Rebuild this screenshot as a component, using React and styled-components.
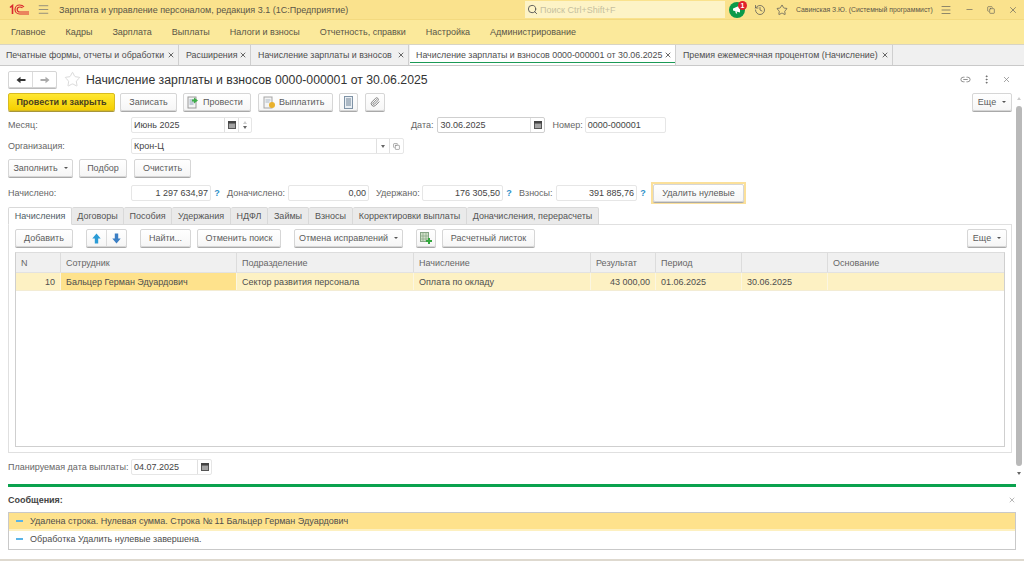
import React from "react";
import styled, { createGlobalStyle } from "styled-components";
import { Menu, History, Star, Minus, X, Search, Link2, MoreVertical, Paperclip, Copy } from "lucide-react";

const Global = createGlobalStyle`
  html, body { margin: 0; padding: 0; background: #fff; }
  body { font-family: "Liberation Sans", Arial, sans-serif; font-size: 9px; color: #4e4e4e; }
  * { box-sizing: border-box; }
`;

const Page = styled.div`
  width: 1024px;
  height: 561px;
  overflow: hidden;
  display: flex;
  flex-direction: column;
  background: #fff;
`;

const TitleBar = styled.div`
  height: 20px;
  display: flex;
  align-items: center;
  background: #fae28d;
  border-bottom: 1px solid #f3d97f;
  flex: none;
`;

const Logo = styled.svg`
  margin-left: 9px;
  width: 20px;
  height: 11px;
`;

const Burger = styled(Menu)`
  margin-left: 8px;
  color: #777;
`;

const AppTitle = styled.span`
  margin-left: 9px;
  width: 466px;
  color: #5a5648;
  font-size: 9px;
  white-space: nowrap;
`;

const SearchBox = styled.div`
  width: 200px;
  height: 17px;
  background: #fdf3c6;
  display: flex;
  align-items: center;
  gap: 2px;
  padding-left: 2px;
  color: #c6bf9f;
  svg { color: #555; }
`;

const Bell = styled.div`
  position: relative;
  margin-left: 4px;
  width: 16px;
  height: 16px;
  border-radius: 50%;
  background: #0b9a4a;
  display: flex;
  align-items: center;
  justify-content: center;
`;

const Badge = styled.span`
  position: absolute;
  top: -1px;
  right: -2px;
  width: 9px;
  height: 9px;
  border-radius: 50%;
  background: #e0202a;
  color: #fff;
  font-size: 7px;
  font-weight: 700;
  line-height: 9px;
  text-align: center;
`;

const TopIcon = styled.span`
  display: flex;
  align-items: center;
  justify-content: center;
  flex: none;
  width: 14px;
  margin-left: ${(p) => p.$ml}px;
  color: #555;
`;

const UserName = styled.span`
  margin-left: 7px;
  width: 143px;
  flex: none;
  font-size: 6.85px;
  white-space: nowrap;
  color: #5a5648;
`;

const MenuBar = styled.nav`
  height: 24px;
  flex: none;
  display: flex;
  align-items: center;
  gap: 20px;
  padding: 0 0 1px 11px;
  background: #fbe99b;
  color: #5a5648;
`;

const TabsBar = styled.div`
  height: 22px;
  flex: none;
  display: flex;
  background: #f0f0f0;
  border-top: 1px solid #d8d4c4;
  border-bottom: 1px solid #c9c9c9;
  font-size: 8.85px;
`;

const OpenTab = styled.div`
  width: ${(p) => p.$w}px;
  display: flex;
  align-items: center;
  justify-content: space-between;
  padding: 0 3px 0 6px;
  white-space: nowrap;
  border-right: 1px solid #cfcfcf;
  margin-right: 1px;
  background: ${(p) => (p.$active ? "#fff" : "#f0f0f0")};
  box-shadow: ${(p) => (p.$active ? "inset 0 -2px 0 #fff, inset 0 -3px 0 #1b9a56" : "none")};
`;

const DocHeader = styled.div`
  height: 26px;
  flex: none;
  display: flex;
  align-items: center;
  padding: 1px 0 0 8px;
`;

const NavGroup = styled.div`
  width: 49px;
  height: 17px;
  display: flex;
  border: 1px solid #d5d5d5;
  border-radius: 2px;
  box-shadow: 0 1px 0 #bbb;
  margin-right: 7px;
`;

const NavCell = styled.div`
  flex: 1;
  display: flex;
  align-items: center;
  justify-content: center;
  & + & { border-left: 1px solid #dcdcdc; }
`;

const DocTitle = styled.h1`
  margin: 0 0 0 5px;
  font-size: 12.28px;
  font-weight: 400;
  color: #333;
  white-space: nowrap;
`;

const HeaderIcons = styled.div`
  margin-left: auto;
  display: flex;
  align-items: center;
  gap: 10px;
  padding-right: 13px;
  color: #888;
`;

const Main = styled.div`
  flex: none;
  height: 383px;
  display: flex;
`;

const Form = styled.div`
  width: 1012px;
  padding-left: 8px;
  display: flex;
  flex-direction: column;
`;

const ScrollColumn = styled.div`
  width: 12px;
  display: flex;
  flex-direction: column;
  align-items: center;
  padding: 5px 0 0 2px;
`;

const ScrollThumb = styled.div`
  width: 6px;
  height: 360px;
  margin: 6px 0;
  background: #b9b9b9;
  border-radius: 3px;
  flex: none;
`;

const Arrow = styled.span`
  flex: none;
  width: 0;
  height: 0;
  border-left: 2px solid transparent;
  border-right: 2px solid transparent;
  border-${(p) => (p.$up ? "bottom" : "top")}: 3px solid ${(p) => (p.$up ? "#ccc" : "#666")};
`;

const Row = styled.div`
  display: flex;
  align-items: center;
  height: ${(p) => p.$h || 16}px;
  margin-top: ${(p) => p.$mt || 0}px;
  flex: none;
`;

const Btn = styled.div`
  flex: none;
  width: ${(p) => p.$w}px;
  height: 18px;
  margin-left: ${(p) => p.$ml || 0}px;
  display: flex;
  align-items: center;
  justify-content: center;
  gap: 3px;
  white-space: nowrap;
  border: 1px solid #d6d6d6;
  border-radius: 2px;
  background: linear-gradient(#fff, #f6f6f6);
  box-shadow: 0 1px 0 #a9a9a9;
  color: #5c5c5c;
`;

const IconBtn = styled(Btn)`
  justify-content: flex-start;
  padding-left: ${(p) => p.$pad}px;
`;

const PrimaryBtn = styled(Btn)`
  background: linear-gradient(#ffe733, #f5cf00);
  border-color: #d8bb20;
  box-shadow: 0 1px 0 #a8963a;
  color: #4a4020;
  font-weight: 700;
`;

const FocusFrame = styled.div`
  margin-left: 2px;
  border: 2px solid #fbe09a;
  display: flex;
`;

const Caret = styled.span`
  width: 0;
  height: 0;
  margin-left: 3px;
  border-left: 2px solid transparent;
  border-right: 2px solid transparent;
  border-top: 2px solid #555;
`;

const Label = styled.span`
  flex: none;
  width: ${(p) => (p.$w ? `${p.$w}px` : "auto")};
  margin-left: ${(p) => p.$ml || 0}px;
  white-space: nowrap;
  color: #666;
`;

const Field = styled.div`
  flex: none;
  width: ${(p) => p.$w}px;
  height: 16px;
  margin-left: ${(p) => p.$ml || 0}px;
  display: flex;
  align-items: center;
  border: 1px solid ${(p) => (p.$strong ? "#cfcfcf" : "#e6e6e6")};
  border-radius: 2px;
  background: #fff;
`;

const FieldText = styled.span`
  flex: 1;
  padding: 0 2px;
  white-space: nowrap;
  color: #444;
  text-align: ${(p) => (p.$right ? "right" : "left")};
`;

const FieldBtn = styled.span`
  flex: none;
  width: ${(p) => p.$w || 14}px;
  height: 100%;
  display: flex;
  flex-direction: column;
  gap: 2px;
  align-items: center;
  justify-content: center;
  border-left: 1px solid #e0e0e0;
  color: #555;
`;

const Hint = styled.span`
  flex: none;
  width: 12px;
  text-align: center;
  font-weight: 700;
  font-size: 9px;
  color: #2f8fc8;
`;

const InnerTabs = styled.div`
  display: flex;
  height: 18px;
  margin-top: 3px;
  flex: none;
  position: relative;
  z-index: 1;
`;

const InnerTab = styled.div`
  width: ${(p) => p.$w}px;
  height: 18px;
  display: flex;
  align-items: center;
  justify-content: center;
  white-space: nowrap;
  border: 1px solid #d9d9d9;
  border-left-width: ${(p) => (p.$first ? 1 : 0)}px;
  border-bottom: ${(p) => (p.$active ? "1px solid #fff" : "1px solid #d9d9d9")};
  background: ${(p) => (p.$active ? "#fff" : "#eaeaea")};
  color: ${(p) => (p.$active ? "#4e5d66" : "#555")};
  border-radius: 2px 2px 0 0;
`;

const Panel = styled.div`
  width: 1004px;
  height: 229px;
  margin-top: -1px;
  flex: none;
  border: 1px solid #e0e0e0;
  padding: 4px 6px 5px 6px;
  display: flex;
  flex-direction: column;
`;

const PanelBar = styled.div`
  display: flex;
  align-items: center;
  height: 18px;
  flex: none;
`;

const ArrowGroup = styled.div`
  flex: none;
  width: 41px;
  height: 18px;
  margin-left: 13px;
  display: flex;
  border: 1px solid #d6d6d6;
  border-radius: 2px;
  box-shadow: 0 1px 0 #a9a9a9;
  background: linear-gradient(#fff, #f6f6f6);
`;

const Table = styled.div`
  margin-top: 5px;
  flex: 1;
  width: 990px;
  border: 1px solid #cfcfcf;
  border-top-color: #ddd;
`;

const TableRow = styled.div`
  display: grid;
  grid-template-columns: 45px 176px 177px 177px 65px 86px 86px 1fr;
  height: ${(p) => p.$h}px;
  background: ${(p) => p.$bg};
  border-bottom: 1px solid ${(p) => p.$line};
`;

const Cell = styled.div`
  display: flex;
  align-items: center;
  justify-content: ${(p) => (p.$right ? "flex-end" : "flex-start")};
  padding: 0 5px;
  white-space: nowrap;
  overflow: hidden;
  background: ${(p) => (p.$current ? "#fee28c" : "transparent")};
  border-right: 1px solid ${(p) => p.$line};
  color: ${(p) => p.$color || "#4e4e4e"};
  &:last-child { border-right: 0; }
`;

const Divider = styled.div`
  width: 1008px;
  height: 3px;
  margin: 9px 0 0 8px;
  background: #0aa24e;
  flex: none;
`;

const MessagesHead = styled.div`
  flex: none;
  height: 25px;
  padding: 0 8px;
  display: flex;
  align-items: center;
  justify-content: space-between;
  font-weight: 700;
  color: #444;
  svg { color: #888; }
`;

const MessageList = styled.div`
  flex: none;
  width: 1008px;
  height: 38px;
  margin-left: 8px;
  border: 1px solid #c9c9c9;
`;

const Message = styled.div`
  height: 18px;
  display: flex;
  align-items: center;
  gap: 7px;
  padding-left: 7px;
  background: ${(p) => (p.$active ? "#fee28c" : "#fff")};
  border-bottom: 2px solid ${(p) => (p.$active ? "#fdf0c0" : "#fff")};
  &::before {
    content: "";
    width: 7px;
    height: 2px;
    background: #5ab4e6;
    flex: none;
  }
`;

const BottomEdge = styled.div`
  margin-top: auto;
  height: 2px;
  flex: none;
  background: #ded9cf;
`;

const openTabs = [
  ["Печатные формы, отчеты и обработки", 179],
  ["Расширения", 71],
  ["Начисление зарплаты и взносов", 157],
  ["Начисление зарплаты и взносов 0000-000001 от 30.06.2025", 266, true],
  ["Премия ежемесячная процентом (Начисление)", 216],
];

const menuItems = ["Главное", "Кадры", "Зарплата", "Выплаты", "Налоги и взносы", "Отчетность, справки", "Настройка", "Администрирование"];

const innerTabs = [
  ["Начисления", 64],
  ["Договоры", 52],
  ["Пособия", 48],
  ["Удержания", 59],
  ["НДФЛ", 37],
  ["Займы", 41],
  ["Взносы", 44],
  ["Корректировки выплаты", 114],
  ["Доначисления, перерасчеты", 132],
];

const headers = ["N", "Сотрудник", "Подразделение", "Начисление", "Результат", "Период", "", "Основание"];

const CalendarBtn = () => (
  <FieldBtn>
    <svg width="8" height="8" viewBox="0 0 8 8">
      <rect x="0.5" y="0.5" width="7" height="7" fill="#8a8a8a" stroke="#555" />
      <rect x="0" y="0" width="8" height="2.4" fill="#444" />
      <path d="M1.5 4h1M3.5 4h1M5.5 4h1M1.5 6h1M3.5 6h1M5.5 6h1" stroke="#eee" />
    </svg>
  </FieldBtn>
);

const PostIcon = () => (
  <svg width="13" height="13" viewBox="0 0 13 13">
    <rect x="1" y="1" width="8" height="11" fill="#f4f4f4" stroke="#9a9a9a" />
    <path d="M2.5 4h5M2.5 6h5M2.5 8h4" stroke="#8aa0b5" />
    <path d="M7 1.5l4 3-4 3V5.5H5V3.5h2z" fill="#3fae49" />
  </svg>
);

const PayIcon = () => (
  <svg width="13" height="13" viewBox="0 0 13 13">
    <rect x="1" y="1" width="8" height="11" fill="#f4f4f4" stroke="#a5a5a5" />
    <path d="M2.5 4h5M2.5 6h4" stroke="#a9b7c5" />
    <circle cx="9" cy="9" r="3" fill="#e9b12c" />
  </svg>
);

const ListIcon = () => (
  <svg width="9" height="13" viewBox="0 0 9 13">
    <rect x="0.5" y="0.5" width="8" height="12" fill="#e9eef3" stroke="#7f93a6" />
    <path d="M2 3h5M2 5h5M2 7h5M2 9h5" stroke="#6f8396" />
  </svg>
);

const BlueArrow = ({ down }) => (
  <svg width="9" height="11" viewBox="0 0 9 11" style={{ transform: down ? "rotate(180deg)" : undefined }}>
    <path d="M4.5 0.5L8.7 5.5H6.2V10.5H2.8V5.5H0.3z" fill={down ? "#3b7fc4" : "#2a9bd6"} />
  </svg>
);

const NavArrow = ({ back }) => (
  <svg width="10" height="8" viewBox="0 0 10 8" style={{ transform: back ? undefined : "rotate(180deg)" }}>
    <path d="M0.5 4L4.5 0.7V3H9.5V5H4.5V7.3z" fill={back ? "#333" : "#aaa"} />
  </svg>
);

const AddRowsIcon = () => (
  <svg width="12" height="12" viewBox="0 0 12 12">
    <rect x="0.5" y="0.5" width="8" height="9" fill="#cfe0c8" stroke="#86a585" />
    <path d="M3 1v8M6 1v8M1 4h7M1 7h7" stroke="#86a585" strokeWidth="0.7" />
    <path d="M8 6h2v2h2v2h-2v2H8v-2H6V8h2z" fill="#35a83f" />
  </svg>
);

export default function App() {
  return (
    <Page>
      <Global />
      <TitleBar>
        <Logo viewBox="0 0 20 11">
          <path d="M1 3.5L3.5 1.5V10" fill="none" stroke="#d9272e" strokeWidth="1.6" />
          <path d="M15 3C14 1.6 12.5 1 10.5 1 8 1 6 3 6 5.5S8 10 10.5 10H20" fill="none" stroke="#d9272e" strokeWidth="1.2" />
          <path d="M13.5 4C13 3.3 12 3 10.8 3 9.3 3 8.2 4 8.2 5.5S9.3 8 10.8 8H20" fill="none" stroke="#d9272e" strokeWidth="1.2" />
        </Logo>
        <Burger size={13} strokeWidth={1.4} />
        <AppTitle>Зарплата и управление персоналом, редакция 3.1 (1С:Предприятие)</AppTitle>
        <SearchBox>
          <Search size={11} />
          Поиск Ctrl+Shift+F
        </SearchBox>
        <Bell>
          <svg width="10" height="9" viewBox="0 0 10 9">
            <path d="M1 3.5L8 0.5V7.5L1 5.5z M3 6L4 8.5H5.2L4.6 6.3z" fill="#fff" />
          </svg>
          <Badge>1</Badge>
        </Bell>
        <TopIcon $ml={8}>
          <History size={12} strokeWidth={1.5} />
        </TopIcon>
        <TopIcon $ml={8}>
          <Star size={12} strokeWidth={1.5} />
        </TopIcon>
        <UserName>Савинская З.Ю. (Системный программист)</UserName>
        <TopIcon $ml={0}>
          <Menu size={12} strokeWidth={1.3} />
        </TopIcon>
        <TopIcon $ml={9}>
          <Minus size={9} strokeWidth={1.6} />
        </TopIcon>
        <TopIcon $ml={8}>
          <Copy size={8} strokeWidth={1.8} />
        </TopIcon>
        <TopIcon $ml={8}>
          <X size={10} strokeWidth={1.5} />
        </TopIcon>
      </TitleBar>

      <MenuBar>
        {menuItems.map((item) => (
          <span key={item}>{item}</span>
        ))}
      </MenuBar>

      <TabsBar>
        {openTabs.map(([title, w, active]) => (
          <OpenTab key={title} $w={w} $active={active}>
            {title}
            <X size={8} strokeWidth={2.4} color="#444" />
          </OpenTab>
        ))}
      </TabsBar>

      <DocHeader>
        <NavGroup>
          <NavCell>
            <NavArrow back />
          </NavCell>
          <NavCell>
            <NavArrow />
          </NavCell>
        </NavGroup>
        <Star size={17} strokeWidth={0.9} color="#c4c4c4" />
        <DocTitle>Начисление зарплаты и взносов 0000-000001 от 30.06.2025</DocTitle>
        <HeaderIcons>
          <Link2 size={11} />
          <MoreVertical size={11} color="#666" />
          <X size={9} />
        </HeaderIcons>
      </DocHeader>

      <Main>
        <Form>
          <Row $h={18} $mt={1}>
            <PrimaryBtn $w={107}>Провести и закрыть</PrimaryBtn>
            <Btn $w={57} $ml={5}>Записать</Btn>
            <IconBtn $w={68} $ml={6} $pad={3}>
              <PostIcon />
              Провести
            </IconBtn>
            <IconBtn $w={75} $ml={7} $pad={4}>
              <PayIcon />
              Выплатить
            </IconBtn>
            <Btn $w={19} $ml={6}>
              <ListIcon />
            </Btn>
            <Btn $w={20} $ml={7}>
              <Paperclip size={10} color="#777" strokeWidth={2.2} />
            </Btn>
            <Btn $w={40} $ml={587}>
              Еще
              <Caret />
            </Btn>
          </Row>

          <Row $mt={6}>
            <Label $w={123}>Месяц:</Label>
            <Field $w={121}>
              <FieldText>Июнь 2025</FieldText>
              <CalendarBtn />
              <FieldBtn $w={13}>
                <Arrow $up />
                <Arrow />
              </FieldBtn>
            </Field>
            <Label $ml={159}>Дата:</Label>
            <Field $w={108} $ml={4} $strong>
              <FieldText>30.06.2025</FieldText>
              <CalendarBtn />
            </Field>
            <Label $ml={7}>Номер:</Label>
            <Field $w={81} $ml={2}>
              <FieldText>0000-000001</FieldText>
            </Field>
          </Row>

          <Row $mt={5}>
            <Label $w={123}>Организация:</Label>
            <Field $w={273}>
              <FieldText>Крон-Ц</FieldText>
              <FieldBtn $w={13}>
                <Arrow />
              </FieldBtn>
              <FieldBtn $w={14}>
                <Copy size={7} strokeWidth={1.6} />
              </FieldBtn>
            </Field>
          </Row>

          <Row $h={18} $mt={5}>
            <Btn $w={65}>
              Заполнить
              <Caret />
            </Btn>
            <Btn $w={48} $ml={6}>Подбор</Btn>
            <Btn $w={57} $ml={7}>Очистить</Btn>
          </Row>

          <Row $h={22} $mt={5}>
            <Label $w={123}>Начислено:</Label>
            <Field $w={80}>
              <FieldText $right>1 297 634,97</FieldText>
            </Field>
            <Hint>?</Hint>
            <Label $w={61} $ml={4}>Доначислено:</Label>
            <Field $w={81}>
              <FieldText $right>0,00</FieldText>
            </Field>
            <Label $w={46} $ml={7}>Удержано:</Label>
            <Field $w={81}>
              <FieldText $right>176 305,50</FieldText>
            </Field>
            <Hint>?</Hint>
            <Label $w={37} $ml={4}>Взносы:</Label>
            <Field $w={81}>
              <FieldText $right>391 885,76</FieldText>
            </Field>
            <Hint>?</Hint>
            <FocusFrame>
              <Btn $w={91}>Удалить нулевые</Btn>
            </FocusFrame>
          </Row>

          <InnerTabs>
            {innerTabs.map(([title, w], i) => (
              <InnerTab key={title} $w={w} $first={i === 0} $active={i === 0}>
                {title}
              </InnerTab>
            ))}
          </InnerTabs>

          <Panel>
            <PanelBar>
              <Btn $w={58}>Добавить</Btn>
              <ArrowGroup>
                <NavCell>
                  <BlueArrow />
                </NavCell>
                <NavCell>
                  <BlueArrow down />
                </NavCell>
              </ArrowGroup>
              <Btn $w={51} $ml={13}>Найти...</Btn>
              <Btn $w={84} $ml={6}>Отменить поиск</Btn>
              <Btn $w={109} $ml={13}>
                Отмена исправлений
                <Caret />
              </Btn>
              <Btn $w={20} $ml={13}>
                <AddRowsIcon />
              </Btn>
              <Btn $w={93} $ml={6}>Расчетный листок</Btn>
              <Btn $w={40} $ml={432}>
                Еще
                <Caret />
              </Btn>
            </PanelBar>
            <Table>
              <TableRow $h={20} $bg="#f0f0f0" $line="#e2e2e2">
                {headers.map((h, i) => (
                  <Cell key={i} $line="#dcdcdc" $color="#666">
                    {h}
                  </Cell>
                ))}
              </TableRow>
              <TableRow $h={18} $bg="#fdf1c3" $line="#f3ecd4">
                <Cell $right $line="#fbf6e2">10</Cell>
                <Cell $current $line="#fbf6e2">Бальцер Герман Эдуардович</Cell>
                <Cell $line="#fbf6e2">Сектор развития персонала</Cell>
                <Cell $line="#fbf6e2">Оплата по окладу</Cell>
                <Cell $right $line="#fbf6e2">43 000,00</Cell>
                <Cell $line="#fbf6e2">01.06.2025</Cell>
                <Cell $line="#fbf6e2">30.06.2025</Cell>
                <Cell $line="#fbf6e2" />
              </TableRow>
            </Table>
          </Panel>

          <Row $mt={6}>
            <Label $w={123}>Планируемая дата выплаты:</Label>
            <Field $w={81}>
              <FieldText>04.07.2025</FieldText>
              <CalendarBtn />
            </Field>
          </Row>
        </Form>
        <ScrollColumn>
          <Arrow $up />
          <ScrollThumb />
          <Arrow />
        </ScrollColumn>
      </Main>

      <Divider />
      <MessagesHead>
        Сообщения:
        <X size={8} strokeWidth={1.8} />
      </MessagesHead>
      <MessageList>
        <Message $active>Удалена строка. Нулевая сумма. Строка № 11 Бальцер Герман Эдуардович</Message>
        <Message>Обработка Удалить нулевые завершена.</Message>
      </MessageList>
      <BottomEdge />
    </Page>
  );
}
